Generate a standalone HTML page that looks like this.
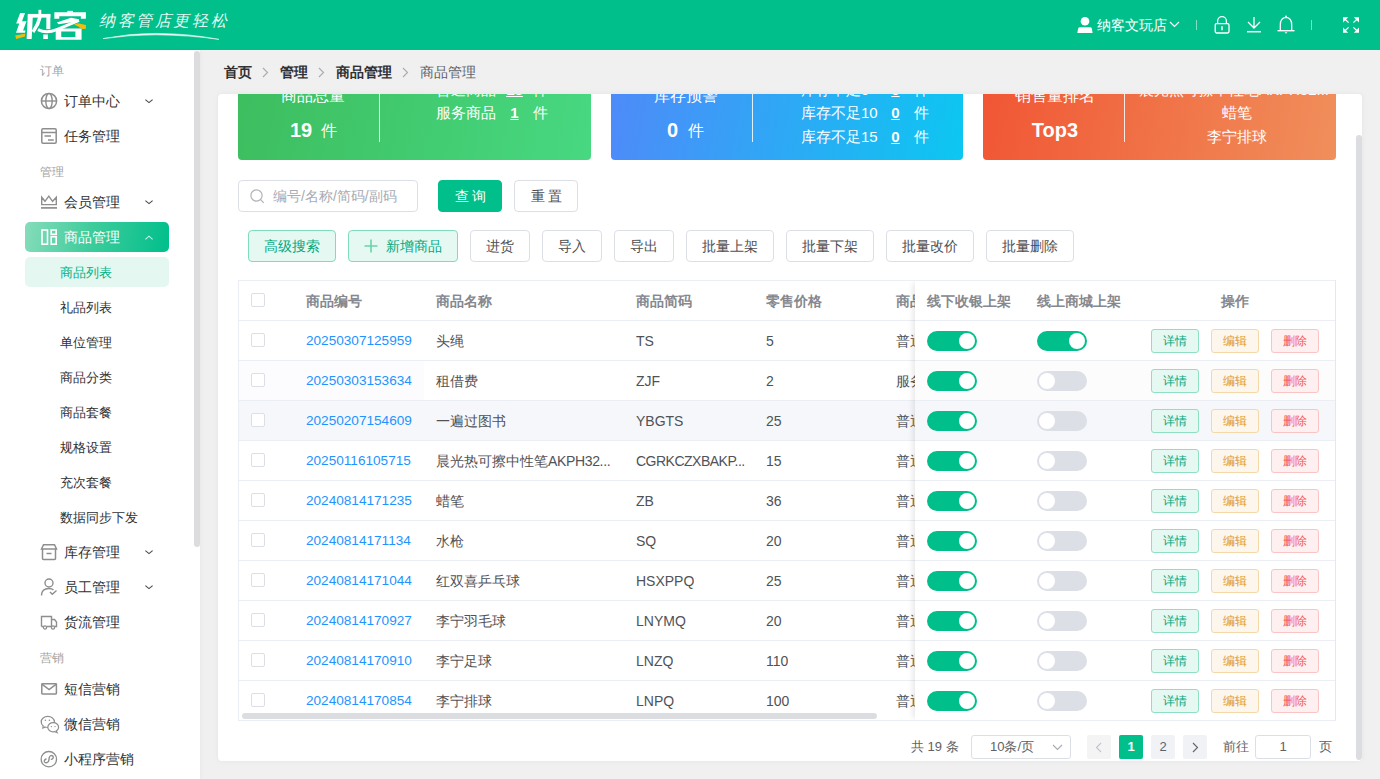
<!DOCTYPE html><html><head><meta charset="utf-8"><style>
*{box-sizing:border-box;margin:0;padding:0}
html,body{width:1380px;height:779px;overflow:hidden;background:#f0f0f0;font-family:"Liberation Sans",sans-serif;color:#303133}
.abs{position:absolute}
.hdr{position:absolute;left:0;top:0;width:1380px;height:50px;background:#00bf8b}
.side{position:absolute;left:0;top:50px;width:200px;height:729px;background:#fff;box-shadow:1px 0 4px rgba(0,0,0,.035)}
.lbl{position:absolute;left:40px;font-size:12px;color:#a3a3a3;line-height:14px;height:14px}
.mi{position:absolute;left:64px;font-size:14px;color:#303133;line-height:16px;height:16px;white-space:nowrap}
.si{position:absolute;left:60px;font-size:13px;color:#303133;line-height:16px;height:16px;white-space:nowrap}
.ic{position:absolute;left:40px;width:18px;height:18px}
.chev{position:absolute;left:145px;width:8px;height:5px}
.panel{position:absolute;left:218px;top:94px;width:1144px;height:667px;background:#fff;border-radius:4px;overflow:hidden;box-shadow:0 0 6px rgba(0,0,0,.05)}
.card{position:absolute;top:-46px;height:112px;border-radius:4px;color:#fff;overflow:hidden}
.ct{position:absolute;white-space:nowrap;line-height:18px;height:18px;color:#fff}
.btn{position:absolute;height:32px;border:1px solid #dcdfe6;border-radius:4px;background:#fff;font-size:14px;color:#4d4f54;text-align:center;line-height:30px;white-space:nowrap}
.th{position:absolute;font-size:14px;font-weight:bold;color:#85888e;line-height:16px;white-space:nowrap}
.td{position:absolute;font-size:14px;color:#505257;line-height:16px;white-space:nowrap;overflow:hidden;text-overflow:ellipsis}
.cb{position:absolute;width:14px;height:14px;border:1px solid #dcdfe6;border-radius:2px;background:#fff}
.sw{position:absolute;width:50px;height:20px;border-radius:10px}
.sw i{position:absolute;top:2px;width:16px;height:16px;border-radius:50%;background:#fff}
.ob{position:absolute;width:48px;height:24px;border:1px solid;border-radius:3px;font-size:12px;text-align:center;line-height:22px}
</style></head><body>
<div class="hdr">
<svg class="abs" style="left:10px;top:5px" width="85" height="40" viewBox="0 0 1380 649"><g fill="#fff"><polygon points="165,130 245,130 195,265 268,265 212,412 252,412 244,452 98,452 150,300 100,300"/><polygon points="290,145 372,145 352,552 270,552"/><polygon points="290,145 655,145 655,205 290,205"/><polygon points="462,78 508,78 508,150 462,150"/><polygon points="590,145 655,145 655,392 590,392"/><polygon points="465,170 525,170 475,320 395,455 352,420 420,300"/><polygon points="540,478 615,478 615,552 540,552"/><polygon points="932,95 1022,95 1022,150 932,150"/><polygon points="720,118 1232,118 1232,222 1150,222 1150,182 800,182 800,222 720,222"/><polygon points="760,285 990,205 1120,232 1105,262 790,312"/><path fill-rule="evenodd" d="M742 382 H1162 V562 H742 Z M832 428 V518 H1062 V428 Z"/></g><path d="M455 400 Q590 470 760 400 L1120 248" stroke="#fff" stroke-width="48" fill="none"/><polygon fill="#f6bb0a" points="85,495 245,468 242,512 100,552"/><polygon fill="#f6bb0a" points="1040,318 1100,298 1232,325 1232,385 1168,388 1100,345"/></svg>
<div class="abs" style="left:99px;top:10px;font-size:16px;color:rgba(255,255,255,.92);line-height:21px;letter-spacing:2.6px;font-style:italic;font-family:'Liberation Serif',serif">纳客管店更轻松</div>
<svg class="abs" style="left:100px;top:30px" width="125" height="12" viewBox="0 0 125 12"><path d="M3 8.6 Q30 3.2 56 3.4 Q90 3.6 119 9.4 Q90 5.2 56 4.8 Q30 4.8 3 8.6 Z" fill="#fff" stroke="#fff" stroke-width=".6" opacity=".92"/></svg>
<svg class="abs" style="left:1077px;top:17px" width="16" height="16" viewBox="0 0 16 16"><circle cx="8" cy="4.2" r="4.3" fill="#fff"/><path d="M0.3 16 L1.2 11.6 Q1.6 10.2 3 10.2 H13 Q14.4 10.2 14.8 11.6 L15.6 16 Z" fill="#fff"/></svg>
<div class="abs" style="left:1097px;top:17px;font-size:14px;color:#fff;line-height:16px">纳客文玩店</div>
<svg class="abs" style="left:1169px;top:21px" width="11" height="7" viewBox="0 0 11 7"><path d="M1 1 L5.5 5.5 L10 1" stroke="#fff" stroke-width="1.2" fill="none"/></svg>
<div class="abs" style="left:1196px;top:20px;width:1px;height:10px;background:rgba(255,255,255,.5)"></div>
<svg class="abs" style="left:1213px;top:15px" width="18" height="19" viewBox="0 0 18 19"><path d="M4.6 8.6 V6 A4.4 4.4 0 0 1 13.4 6 V8.6" stroke="#fff" stroke-width="1.3" fill="none"/><rect x="2.2" y="8.6" width="13.8" height="9.4" rx="1.4" stroke="#fff" stroke-width="1.3" fill="none"/><path d="M9 11.3 V15.3" stroke="#fff" stroke-width="1.5"/></svg>
<svg class="abs" style="left:1246px;top:16px" width="16" height="18" viewBox="0 0 16 18"><path d="M8 1 V12 M2 6 L8 12 L14 6" stroke="#fff" stroke-width="1.3" fill="none"/><path d="M1 15.7 H15" stroke="#fff" stroke-width="1.5"/></svg>
<svg class="abs" style="left:1276px;top:15px" width="20" height="20" viewBox="0 0 20 20"><path d="M4.3 15.6 V10 Q4.3 2.8 10 2.4 Q15.7 2.8 15.7 10 V15.6" stroke="#fff" stroke-width="1.3" fill="none"/><path d="M1.5 15.7 H18.5" stroke="#fff" stroke-width="1.4"/><path d="M8.6 17.2 H11.4 L10 18.8 Z" fill="#fff"/><circle cx="10" cy="1.6" r="1" fill="#fff"/></svg>
<div class="abs" style="left:1311px;top:20px;width:1px;height:10px;background:rgba(255,255,255,.5)"></div>
<svg class="abs" style="left:1342px;top:16px" width="18" height="18" viewBox="0 0 18 18"><g fill="#fff"><path d="M1 1.2 H6.2 L1 6.4 Z"/><path d="M17 1.2 H11.8 L17 6.4 Z"/><path d="M1 16.8 H6.2 L1 11.6 Z"/><path d="M17 16.8 H11.8 L17 11.6 Z"/></g><path d="M2.5 2.7 L6.6 6.6 M15.5 2.7 L11.4 6.6 M2.5 15.3 L6.6 11.4 M15.5 15.3 L11.4 11.4" stroke="#fff" stroke-width="1.25"/></svg>
</div>
<div class="side">
<div class="abs" style="left:194px;top:1px;width:6px;height:496px;background:#dcdcdf;border-radius:3px"></div>
<div class="lbl" style="top:14px">订单</div>
<div class="lbl" style="top:115px">管理</div>
<div class="lbl" style="top:601px">营销</div>
<div class="abs" style="left:25px;top:172px;width:144px;height:30px;border-radius:5px;background:linear-gradient(100deg,#86dcbb 0%,#3fcc9c 45%,#00bf8b 100%)"></div>
<div class="abs" style="left:25px;top:207px;width:144px;height:30px;border-radius:5px;background:#e5f7f1"></div>
<svg class="ic" style="top:42px;overflow:visible" viewBox="0 0 18 18"><circle cx="9" cy="9" r="7.6" stroke="#8e8e8e" stroke-width="1.5" fill="none"/><ellipse cx="9" cy="9" rx="3.2" ry="7.6" stroke="#8e8e8e" stroke-width="1.4" fill="none"/><path d="M1.5 9 H16.5" stroke="#8e8e8e" stroke-width="1.4"/></svg>
<div class="mi" style="top:43px;color:#303133">订单中心</div>
<svg class="chev" style="top:49px" viewBox="0 0 8 5"><path d="M0.4 0.6 L4 3.6 L7.6 0.6" stroke="#4a4a4a" stroke-width="1.1" fill="none"/></svg>
<svg class="ic" style="top:77px;overflow:visible" viewBox="0 0 18 18"><rect x="1.8" y="1.8" width="14.4" height="14.4" rx="1.2" stroke="#8e8e8e" stroke-width="1.5" fill="none"/><path d="M2 5.6 H16 M4.5 9 H11 M8 13 H13.8" stroke="#8e8e8e" stroke-width="1.5"/></svg>
<div class="mi" style="top:78px;color:#303133">任务管理</div>
<svg class="ic" style="top:142px;overflow:visible" viewBox="0 0 18 18"><path d="M1.7 5.2 V12.6 H16.3 V5.2 L12.6 9.3 L8.8 4.2 L5 9.3 Z" stroke="#8e8e8e" stroke-width="1.4" fill="none" stroke-linejoin="miter"/><path d="M1 15.9 H17" stroke="#8e8e8e" stroke-width="1.7"/></svg>
<div class="mi" style="top:144px;color:#303133">会员管理</div>
<svg class="chev" style="top:150px" viewBox="0 0 8 5"><path d="M0.4 0.6 L4 3.6 L7.6 0.6" stroke="#4a4a4a" stroke-width="1.1" fill="none"/></svg>
<svg class="ic" style="top:177px;overflow:visible" viewBox="0 0 18 18"><rect x="2" y="3" width="5.5" height="14.2" stroke="#fff" stroke-width="1.6" fill="none"/><rect x="11.2" y="3" width="5" height="4.3" stroke="#fff" stroke-width="1.6" fill="none"/><rect x="11.2" y="9.7" width="5" height="7.5" stroke="#fff" stroke-width="1.6" fill="none"/></svg>
<div class="mi" style="top:179px;color:#fff">商品管理</div>
<svg class="chev" style="top:185px;opacity:.8" viewBox="0 0 8 5"><path d="M0.4 4.4 L4 1.2 L7.6 4.4" stroke="#fff" stroke-width="1.1" fill="none"/></svg>
<svg class="ic" style="top:493px;overflow:visible" viewBox="0 0 18 18"><path d="M2.5 6 V15.5 Q2.5 16.5 3.5 16.5 H14.5 Q15.5 16.5 15.5 15.5 V6" stroke="#8e8e8e" stroke-width="1.5" fill="none"/><path d="M1.5 6 L3.5 1.8 H14.5 L16.5 6 Z" stroke="#8e8e8e" stroke-width="1.5" fill="none"/><path d="M6.5 10.5 H11.5" stroke="#8e8e8e" stroke-width="1.5"/></svg>
<div class="mi" style="top:494px;color:#303133">库存管理</div>
<svg class="chev" style="top:500px" viewBox="0 0 8 5"><path d="M0.4 0.6 L4 3.6 L7.6 0.6" stroke="#4a4a4a" stroke-width="1.1" fill="none"/></svg>
<svg class="ic" style="top:528px;overflow:visible" viewBox="0 0 18 18"><circle cx="9" cy="5" r="4" stroke="#8e8e8e" stroke-width="1.4" fill="none"/><path d="M1.5 17.5 Q1.5 10.5 9 10.5 Q12 10.5 13.5 12" stroke="#8e8e8e" stroke-width="1.4" fill="none"/><path d="M10 14 L12.3 16.3 L16.5 12.5" stroke="#8e8e8e" stroke-width="1.4" fill="none"/></svg>
<div class="mi" style="top:529px;color:#303133">员工管理</div>
<svg class="chev" style="top:535px" viewBox="0 0 8 5"><path d="M0.4 0.6 L4 3.6 L7.6 0.6" stroke="#4a4a4a" stroke-width="1.1" fill="none"/></svg>
<svg class="ic" style="top:563px;overflow:visible" viewBox="0 0 18 18"><path d="M1.5 13.5 V3.5 H11.5 V13.5 M11.5 6.5 H14.5 L16.5 9 V13.5 H14.5 M3.5 13.5 H1.5 M11.5 13.5 H7" stroke="#8e8e8e" stroke-width="1.4" fill="none"/><circle cx="5" cy="14.5" r="1.6" stroke="#8e8e8e" stroke-width="1.3" fill="none"/><circle cx="13" cy="14.5" r="1.6" stroke="#8e8e8e" stroke-width="1.3" fill="none"/></svg>
<div class="mi" style="top:564px;color:#303133">货流管理</div>
<svg class="ic" style="top:629px;overflow:visible" viewBox="0 0 18 18"><rect x="1.8" y="4.7" width="14.6" height="10.2" rx=".6" stroke="#8e8e8e" stroke-width="1.5" fill="none"/><path d="M2.2 5.4 L9.1 10.6 L16 5.4" stroke="#8e8e8e" stroke-width="1.5" fill="none"/></svg>
<div class="mi" style="top:631px;color:#303133">短信营销</div>
<svg class="ic" style="top:665px;overflow:visible" viewBox="0 0 18 18"><ellipse cx="7.8" cy="6.9" rx="6.6" ry="5.6" stroke="#8e8e8e" stroke-width="1.2" fill="none"/><path d="M3.2 11 L2.8 13.2 L5.6 12" stroke="#8e8e8e" stroke-width="1.1" fill="#fff"/><ellipse cx="13.2" cy="12.3" rx="5.4" ry="4.6" stroke="#8e8e8e" stroke-width="1.2" fill="#fff"/><path d="M16.2 16 L17.2 17.6 L14.6 16.7" stroke="#8e8e8e" stroke-width="1.1" fill="#fff"/><circle cx="5.4" cy="5.2" r=".75" fill="#8e8e8e"/><circle cx="9.4" cy="5.2" r=".75" fill="#8e8e8e"/><circle cx="11.4" cy="11.6" r=".7" fill="#8e8e8e"/><circle cx="15" cy="11.6" r=".7" fill="#8e8e8e"/></svg>
<div class="mi" style="top:666px;color:#303133">微信营销</div>
<svg class="ic" style="top:700px;overflow:visible" viewBox="0 0 18 18"><circle cx="8.85" cy="9.2" r="7.7" stroke="#8e8e8e" stroke-width="1.3" fill="none"/><path d="M6 9 C4.5 9.6 4 11 4.5 12 C5.2 13.2 7.6 13 8.4 11.5 C9 10.4 9 8.2 9.5 7 C10 5.6 11.6 5.2 12.6 5.9 C13.8 6.8 13.4 8.8 11.4 9.4" stroke="#8e8e8e" stroke-width="1.4" fill="none" stroke-linecap="round"/></svg>
<div class="mi" style="top:701px;color:#303133">小程序营销</div>
<div class="si" style="top:215px;color:#00b386">商品列表</div>
<div class="si" style="top:250px;color:#303133">礼品列表</div>
<div class="si" style="top:285px;color:#303133">单位管理</div>
<div class="si" style="top:320px;color:#303133">商品分类</div>
<div class="si" style="top:355px;color:#303133">商品套餐</div>
<div class="si" style="top:390px;color:#303133">规格设置</div>
<div class="si" style="top:425px;color:#303133">充次套餐</div>
<div class="si" style="top:460px;color:#303133">数据同步下发</div>
</div>
<div class="abs" style="left:224px;top:64px;font-size:14px;font-weight:bold;color:#303133;line-height:16px;white-space:nowrap">首页</div>
<div class="abs" style="left:280px;top:64px;font-size:14px;font-weight:bold;color:#303133;line-height:16px;white-space:nowrap">管理</div>
<div class="abs" style="left:336px;top:64px;font-size:14px;font-weight:bold;color:#303133;line-height:16px;white-space:nowrap">商品管理</div>
<div class="abs" style="left:420px;top:64px;font-size:14px;font-weight:normal;color:#606266;line-height:16px;white-space:nowrap">商品管理</div>
<svg class="abs" style="left:262px;top:67px" width="7" height="11" viewBox="0 0 7 11"><path d="M1 1 L5.5 5.5 L1 10" stroke="#a8abb2" stroke-width="1.1" fill="none"/></svg>
<svg class="abs" style="left:318px;top:67px" width="7" height="11" viewBox="0 0 7 11"><path d="M1 1 L5.5 5.5 L1 10" stroke="#a8abb2" stroke-width="1.1" fill="none"/></svg>
<svg class="abs" style="left:402px;top:67px" width="7" height="11" viewBox="0 0 7 11"><path d="M1 1 L5.5 5.5 L1 10" stroke="#a8abb2" stroke-width="1.1" fill="none"/></svg>
<div class="panel">
<div class="abs" style="left:1138px;top:41px;width:6px;height:625px;background:#dcdde0;border-radius:3px"></div>
<div class="card" style="left:20px;width:353px;background:linear-gradient(100deg,#3dbd5e 0%,#47d881 100%)">
<div class="abs" style="left:141px;top:0;width:1px;height:94px;background:rgba(255,255,255,.85)"></div>
</div>
<div class="card" style="left:393px;width:352px;background:linear-gradient(100deg,#5089f9 0%,#0cc7f1 100%)">
<div class="abs" style="left:141px;top:0;width:1px;height:94px;background:rgba(255,255,255,.85)"></div>
</div>
<div class="card" style="left:765px;width:353px;background:linear-gradient(100deg,#f15533 0%,#f08f5b 100%)">
<div class="abs" style="left:141px;top:0;width:1px;height:94px;background:rgba(255,255,255,.85)"></div>
</div>
<div class="ct" style="left:-55px;top:-10px;width:300px;text-align:center;font-size:16px;line-height:24px;height:24px;">商品总量</div>
<div class="ct" style="left:72px;top:24px;font-size:20px;line-height:24px;height:24px;font-weight:bold">19</div>
<div class="ct" style="left:103px;top:25px;font-size:16px;line-height:24px;height:24px;">件</div>
<div class="ct" style="left:218px;top:-16px;font-size:15px;line-height:24px;height:24px;">普通商品</div>
<div class="ct" style="left:146.5px;top:-16px;width:300px;text-align:center;font-size:15px;line-height:24px;height:24px;font-weight:bold"><u>18</u></div>
<div class="ct" style="left:315px;top:-16px;font-size:15px;line-height:24px;height:24px;">件</div>
<div class="ct" style="left:218px;top:7px;font-size:15px;line-height:24px;height:24px;">服务商品</div>
<div class="ct" style="left:146.5px;top:7px;width:300px;text-align:center;font-size:15px;line-height:24px;height:24px;font-weight:bold"><u>1</u></div>
<div class="ct" style="left:315px;top:7px;font-size:15px;line-height:24px;height:24px;">件</div>
<div class="ct" style="left:317.5px;top:-10px;width:300px;text-align:center;font-size:16px;line-height:24px;height:24px;">库存预警</div>
<div class="ct" style="left:449px;top:24px;font-size:20px;line-height:24px;height:24px;font-weight:bold">0</div>
<div class="ct" style="left:470px;top:25px;font-size:16px;line-height:24px;height:24px;">件</div>
<div class="ct" style="left:583px;top:-16px;font-size:15px;line-height:24px;height:24px;">库存不足5</div>
<div class="ct" style="left:527.5px;top:-16px;width:300px;text-align:center;font-size:15px;line-height:24px;height:24px;font-weight:bold"><u>0</u></div>
<div class="ct" style="left:696px;top:-16px;font-size:15px;line-height:24px;height:24px;">件</div>
<div class="ct" style="left:583px;top:7px;font-size:15px;line-height:24px;height:24px;">库存不足10</div>
<div class="ct" style="left:527.5px;top:7px;width:300px;text-align:center;font-size:15px;line-height:24px;height:24px;font-weight:bold"><u>0</u></div>
<div class="ct" style="left:696px;top:7px;font-size:15px;line-height:24px;height:24px;">件</div>
<div class="ct" style="left:583px;top:31px;font-size:15px;line-height:24px;height:24px;">库存不足15</div>
<div class="ct" style="left:527.5px;top:31px;width:300px;text-align:center;font-size:15px;line-height:24px;height:24px;font-weight:bold"><u>0</u></div>
<div class="ct" style="left:696px;top:31px;font-size:15px;line-height:24px;height:24px;">件</div>
<div class="ct" style="left:687px;top:-10px;width:300px;text-align:center;font-size:16px;line-height:24px;height:24px;">销售量排名</div>
<div class="ct" style="left:687px;top:24px;width:300px;text-align:center;font-size:20px;line-height:24px;height:24px;font-weight:bold">Top3</div>
<div class="ct" style="left:866px;top:-16px;width:300px;text-align:center;font-size:15px;line-height:24px;height:24px;">晨光热可擦中性笔AKPH32...</div>
<div class="ct" style="left:869px;top:7px;width:300px;text-align:center;font-size:15px;line-height:24px;height:24px;">蜡笔</div>
<div class="ct" style="left:869px;top:31px;width:300px;text-align:center;font-size:15px;line-height:24px;height:24px;">李宁排球</div>
<div class="abs" style="left:20px;top:86px;width:180px;height:32px;border:1px solid #dcdfe6;border-radius:4px"></div>
<svg class="abs" style="left:32px;top:95px" width="15" height="15" viewBox="0 0 15 15"><circle cx="6.5" cy="6.5" r="5.6" stroke="#b0b3b8" stroke-width="1.2" fill="none"/><path d="M10.6 10.6 L13.8 13.8" stroke="#b0b3b8" stroke-width="1.2"/></svg>
<div class="abs" style="left:55px;top:94px;font-size:14px;color:#a8abb2;line-height:16px;white-space:nowrap">编号/名称/简码/副码</div>
<div class="btn" style="left:220px;top:86px;width:64px;background:#00bf8b;border-color:#00bf8b;color:#fff;letter-spacing:3px;text-indent:3px">查询</div>
<div class="btn" style="left:296px;top:86px;width:64px;letter-spacing:3px;text-indent:3px">重置</div>
<div class="btn" style="left:30px;top:136px;width:88px;background:#e6f8f2;border-color:#7fdcbc;color:#00a87f;">高级搜索</div>
<div class="btn" style="left:130px;top:136px;width:110px;background:#e6f8f2;border-color:#7fdcbc;color:#00a87f;"><svg style="display:inline-block;vertical-align:-2px;margin-right:8px" width="14" height="14" viewBox="0 0 14 14"><path d="M7 0.5 V13.5 M0.5 7 H13.5" stroke="#6ad2ac" stroke-width="1.6"/></svg>新增商品</div>
<div class="btn" style="left:252px;top:136px;width:60px;">进货</div>
<div class="btn" style="left:324px;top:136px;width:60px;">导入</div>
<div class="btn" style="left:396px;top:136px;width:60px;">导出</div>
<div class="btn" style="left:468px;top:136px;width:88px;">批量上架</div>
<div class="btn" style="left:568px;top:136px;width:88px;">批量下架</div>
<div class="btn" style="left:668px;top:136px;width:88px;">批量改价</div>
<div class="btn" style="left:768px;top:136px;width:88px;">批量删除</div>
<div class="abs" style="left:20px;top:186px;width:1098px;height:441px;border:1px solid #ebeef5;border-right-color:#e4e7ed;overflow:hidden">
<div class="abs" style="left:0;top:40px;width:1096px;height:40px;background:#fff"></div>
<div class="abs" style="left:0;top:80px;width:1096px;height:40px;background:#fff"></div>
<div class="abs" style="left:0;top:80px;width:185px;height:40px;background:#fcfcfe"></div>
<div class="abs" style="left:0;top:120px;width:1096px;height:40px;background:#f5f7fa"></div>
<div class="abs" style="left:0;top:160px;width:1096px;height:40px;background:#fff"></div>
<div class="abs" style="left:0;top:200px;width:1096px;height:40px;background:#fff"></div>
<div class="abs" style="left:0;top:240px;width:1096px;height:40px;background:#fff"></div>
<div class="abs" style="left:0;top:280px;width:1096px;height:40px;background:#fff"></div>
<div class="abs" style="left:0;top:320px;width:1096px;height:40px;background:#fff"></div>
<div class="abs" style="left:0;top:360px;width:1096px;height:40px;background:#fff"></div>
<div class="abs" style="left:0;top:400px;width:1096px;height:40px;background:#fff"></div>
<div class="abs" style="left:0;top:39px;width:1096px;height:1px;background:#ebeef5"></div>
<div class="abs" style="left:0;top:79px;width:1096px;height:1px;background:#ebeef5"></div>
<div class="abs" style="left:0;top:119px;width:1096px;height:1px;background:#ebeef5"></div>
<div class="abs" style="left:0;top:159px;width:1096px;height:1px;background:#ebeef5"></div>
<div class="abs" style="left:0;top:199px;width:1096px;height:1px;background:#ebeef5"></div>
<div class="abs" style="left:0;top:239px;width:1096px;height:1px;background:#ebeef5"></div>
<div class="abs" style="left:0;top:279px;width:1096px;height:1px;background:#ebeef5"></div>
<div class="abs" style="left:0;top:319px;width:1096px;height:1px;background:#ebeef5"></div>
<div class="abs" style="left:0;top:359px;width:1096px;height:1px;background:#ebeef5"></div>
<div class="abs" style="left:0;top:399px;width:1096px;height:1px;background:#ebeef5"></div>
<div class="abs" style="left:0;top:439px;width:1096px;height:1px;background:#ebeef5"></div>
<div class="cb" style="left:12px;top:12px"></div>
<div class="th" style="left:67px;top:12px">商品编号</div>
<div class="th" style="left:197px;top:12px">商品名称</div>
<div class="th" style="left:397px;top:12px">商品简码</div>
<div class="th" style="left:527px;top:12px">零售价格</div>
<div class="th" style="left:657px;top:12px">商品类型</div>
<div class="cb" style="left:12px;top:52px"></div>
<div class="td" style="left:67px;top:52px;color:#1f93ff;font-size:13.6px">20250307125959</div>
<div class="td" style="left:197px;top:52px">头绳</div>
<div class="td" style="left:397px;top:52px">TS</div>
<div class="td" style="left:527px;top:52px">5</div>
<div class="td" style="left:657px;top:52px;width:19px;overflow:hidden;text-overflow:clip">普通</div>
<div class="cb" style="left:12px;top:92px"></div>
<div class="td" style="left:67px;top:92px;color:#1f93ff;font-size:13.6px">20250303153634</div>
<div class="td" style="left:197px;top:92px">租借费</div>
<div class="td" style="left:397px;top:92px">ZJF</div>
<div class="td" style="left:527px;top:92px">2</div>
<div class="td" style="left:657px;top:92px;width:19px;overflow:hidden;text-overflow:clip">服务</div>
<div class="cb" style="left:12px;top:132px"></div>
<div class="td" style="left:67px;top:132px;color:#1f93ff;font-size:13.6px">20250207154609</div>
<div class="td" style="left:197px;top:132px">一遍过图书</div>
<div class="td" style="left:397px;top:132px">YBGTS</div>
<div class="td" style="left:527px;top:132px">25</div>
<div class="td" style="left:657px;top:132px;width:19px;overflow:hidden;text-overflow:clip">普通</div>
<div class="cb" style="left:12px;top:172px"></div>
<div class="td" style="left:67px;top:172px;color:#1f93ff;font-size:13.6px">20250116105715</div>
<div class="td" style="left:197px;top:172px">晨光热可擦中性笔<span style="letter-spacing:-.35px">AKPH32...</span></div>
<div class="td" style="left:397px;top:172px"><span style="letter-spacing:-.5px">CGRKCZXBAKP...</span></div>
<div class="td" style="left:527px;top:172px">15</div>
<div class="td" style="left:657px;top:172px;width:19px;overflow:hidden;text-overflow:clip">普通</div>
<div class="cb" style="left:12px;top:212px"></div>
<div class="td" style="left:67px;top:212px;color:#1f93ff;font-size:13.6px">20240814171235</div>
<div class="td" style="left:197px;top:212px">蜡笔</div>
<div class="td" style="left:397px;top:212px">ZB</div>
<div class="td" style="left:527px;top:212px">36</div>
<div class="td" style="left:657px;top:212px;width:19px;overflow:hidden;text-overflow:clip">普通</div>
<div class="cb" style="left:12px;top:252px"></div>
<div class="td" style="left:67px;top:252px;color:#1f93ff;font-size:13.6px">20240814171134</div>
<div class="td" style="left:197px;top:252px">水枪</div>
<div class="td" style="left:397px;top:252px">SQ</div>
<div class="td" style="left:527px;top:252px">20</div>
<div class="td" style="left:657px;top:252px;width:19px;overflow:hidden;text-overflow:clip">普通</div>
<div class="cb" style="left:12px;top:292px"></div>
<div class="td" style="left:67px;top:292px;color:#1f93ff;font-size:13.6px">20240814171044</div>
<div class="td" style="left:197px;top:292px">红双喜乒乓球</div>
<div class="td" style="left:397px;top:292px">HSXPPQ</div>
<div class="td" style="left:527px;top:292px">25</div>
<div class="td" style="left:657px;top:292px;width:19px;overflow:hidden;text-overflow:clip">普通</div>
<div class="cb" style="left:12px;top:332px"></div>
<div class="td" style="left:67px;top:332px;color:#1f93ff;font-size:13.6px">20240814170927</div>
<div class="td" style="left:197px;top:332px">李宁羽毛球</div>
<div class="td" style="left:397px;top:332px">LNYMQ</div>
<div class="td" style="left:527px;top:332px">20</div>
<div class="td" style="left:657px;top:332px;width:19px;overflow:hidden;text-overflow:clip">普通</div>
<div class="cb" style="left:12px;top:372px"></div>
<div class="td" style="left:67px;top:372px;color:#1f93ff;font-size:13.6px">20240814170910</div>
<div class="td" style="left:197px;top:372px">李宁足球</div>
<div class="td" style="left:397px;top:372px">LNZQ</div>
<div class="td" style="left:527px;top:372px">110</div>
<div class="td" style="left:657px;top:372px;width:19px;overflow:hidden;text-overflow:clip">普通</div>
<div class="cb" style="left:12px;top:412px"></div>
<div class="td" style="left:67px;top:412px;color:#1f93ff;font-size:13.6px">20240814170854</div>
<div class="td" style="left:197px;top:412px">李宁排球</div>
<div class="td" style="left:397px;top:412px">LNPQ</div>
<div class="td" style="left:527px;top:412px">100</div>
<div class="td" style="left:657px;top:412px;width:19px;overflow:hidden;text-overflow:clip">普通</div>
<div class="abs" style="left:3px;top:432px;width:635px;height:6px;background:#dcdde0;border-radius:3px"></div>
<div class="abs" style="left:676px;top:0;width:421px;height:439px;background:transparent;box-shadow:-4px 0 6px -2px rgba(0,0,0,.10)">
<div class="abs" style="left:0;top:40px;width:421px;height:40px;background:#fff"></div>
<div class="abs" style="left:0;top:80px;width:421px;height:40px;background:#fcfcfd"></div>
<div class="abs" style="left:0;top:120px;width:421px;height:40px;background:#f5f7fa"></div>
<div class="abs" style="left:0;top:160px;width:421px;height:40px;background:#fff"></div>
<div class="abs" style="left:0;top:200px;width:421px;height:40px;background:#fff"></div>
<div class="abs" style="left:0;top:240px;width:421px;height:40px;background:#fff"></div>
<div class="abs" style="left:0;top:280px;width:421px;height:40px;background:#fff"></div>
<div class="abs" style="left:0;top:320px;width:421px;height:40px;background:#fff"></div>
<div class="abs" style="left:0;top:360px;width:421px;height:40px;background:#fff"></div>
<div class="abs" style="left:0;top:400px;width:421px;height:40px;background:#fff"></div>
<div class="abs" style="left:0;top:0;width:421px;height:40px;background:#fff"></div>
<div class="abs" style="left:0;top:39px;width:421px;height:1px;background:#ebeef5"></div>
<div class="abs" style="left:0;top:79px;width:421px;height:1px;background:#ebeef5"></div>
<div class="abs" style="left:0;top:119px;width:421px;height:1px;background:#ebeef5"></div>
<div class="abs" style="left:0;top:159px;width:421px;height:1px;background:#ebeef5"></div>
<div class="abs" style="left:0;top:199px;width:421px;height:1px;background:#ebeef5"></div>
<div class="abs" style="left:0;top:239px;width:421px;height:1px;background:#ebeef5"></div>
<div class="abs" style="left:0;top:279px;width:421px;height:1px;background:#ebeef5"></div>
<div class="abs" style="left:0;top:319px;width:421px;height:1px;background:#ebeef5"></div>
<div class="abs" style="left:0;top:359px;width:421px;height:1px;background:#ebeef5"></div>
<div class="abs" style="left:0;top:399px;width:421px;height:1px;background:#ebeef5"></div>
<div class="abs" style="left:0;top:439px;width:421px;height:1px;background:#ebeef5"></div>
<div class="th" style="left:12px;top:12px">线下收银上架</div>
<div class="th" style="left:122px;top:12px">线上商城上架</div>
<div class="th" style="left:220px;top:12px;width:200px;text-align:center">操作</div>
<div class="sw" style="left:12px;top:50px;background:#00bf8b"><i style="left:32px"></i></div>
<div class="sw" style="left:122px;top:50px;background:#00bf8b"><i style="left:32px"></i></div>
<div class="ob" style="left:236px;top:48px;background:#e6f8f2;border-color:#8fdfc3;color:#00a67e">详情</div>
<div class="ob" style="left:296px;top:48px;background:#fdf6ec;border-color:#f5d8a8;color:#df982c">编辑</div>
<div class="ob" style="left:356px;top:48px;background:#fef0f0;border-color:#fbc4c4;color:#f05656">删除</div>
<div class="sw" style="left:12px;top:90px;background:#00bf8b"><i style="left:32px"></i></div>
<div class="sw" style="left:122px;top:90px;background:#dcdfe6"><i style="left:2px"></i></div>
<div class="ob" style="left:236px;top:88px;background:#e6f8f2;border-color:#8fdfc3;color:#00a67e">详情</div>
<div class="ob" style="left:296px;top:88px;background:#fdf6ec;border-color:#f5d8a8;color:#df982c">编辑</div>
<div class="ob" style="left:356px;top:88px;background:#fef0f0;border-color:#fbc4c4;color:#f05656">删除</div>
<div class="sw" style="left:12px;top:130px;background:#00bf8b"><i style="left:32px"></i></div>
<div class="sw" style="left:122px;top:130px;background:#dcdfe6"><i style="left:2px"></i></div>
<div class="ob" style="left:236px;top:128px;background:#e6f8f2;border-color:#8fdfc3;color:#00a67e">详情</div>
<div class="ob" style="left:296px;top:128px;background:#fdf6ec;border-color:#f5d8a8;color:#df982c">编辑</div>
<div class="ob" style="left:356px;top:128px;background:#fef0f0;border-color:#fbc4c4;color:#f05656">删除</div>
<div class="sw" style="left:12px;top:170px;background:#00bf8b"><i style="left:32px"></i></div>
<div class="sw" style="left:122px;top:170px;background:#dcdfe6"><i style="left:2px"></i></div>
<div class="ob" style="left:236px;top:168px;background:#e6f8f2;border-color:#8fdfc3;color:#00a67e">详情</div>
<div class="ob" style="left:296px;top:168px;background:#fdf6ec;border-color:#f5d8a8;color:#df982c">编辑</div>
<div class="ob" style="left:356px;top:168px;background:#fef0f0;border-color:#fbc4c4;color:#f05656">删除</div>
<div class="sw" style="left:12px;top:210px;background:#00bf8b"><i style="left:32px"></i></div>
<div class="sw" style="left:122px;top:210px;background:#dcdfe6"><i style="left:2px"></i></div>
<div class="ob" style="left:236px;top:208px;background:#e6f8f2;border-color:#8fdfc3;color:#00a67e">详情</div>
<div class="ob" style="left:296px;top:208px;background:#fdf6ec;border-color:#f5d8a8;color:#df982c">编辑</div>
<div class="ob" style="left:356px;top:208px;background:#fef0f0;border-color:#fbc4c4;color:#f05656">删除</div>
<div class="sw" style="left:12px;top:250px;background:#00bf8b"><i style="left:32px"></i></div>
<div class="sw" style="left:122px;top:250px;background:#dcdfe6"><i style="left:2px"></i></div>
<div class="ob" style="left:236px;top:248px;background:#e6f8f2;border-color:#8fdfc3;color:#00a67e">详情</div>
<div class="ob" style="left:296px;top:248px;background:#fdf6ec;border-color:#f5d8a8;color:#df982c">编辑</div>
<div class="ob" style="left:356px;top:248px;background:#fef0f0;border-color:#fbc4c4;color:#f05656">删除</div>
<div class="sw" style="left:12px;top:290px;background:#00bf8b"><i style="left:32px"></i></div>
<div class="sw" style="left:122px;top:290px;background:#dcdfe6"><i style="left:2px"></i></div>
<div class="ob" style="left:236px;top:288px;background:#e6f8f2;border-color:#8fdfc3;color:#00a67e">详情</div>
<div class="ob" style="left:296px;top:288px;background:#fdf6ec;border-color:#f5d8a8;color:#df982c">编辑</div>
<div class="ob" style="left:356px;top:288px;background:#fef0f0;border-color:#fbc4c4;color:#f05656">删除</div>
<div class="sw" style="left:12px;top:330px;background:#00bf8b"><i style="left:32px"></i></div>
<div class="sw" style="left:122px;top:330px;background:#dcdfe6"><i style="left:2px"></i></div>
<div class="ob" style="left:236px;top:328px;background:#e6f8f2;border-color:#8fdfc3;color:#00a67e">详情</div>
<div class="ob" style="left:296px;top:328px;background:#fdf6ec;border-color:#f5d8a8;color:#df982c">编辑</div>
<div class="ob" style="left:356px;top:328px;background:#fef0f0;border-color:#fbc4c4;color:#f05656">删除</div>
<div class="sw" style="left:12px;top:370px;background:#00bf8b"><i style="left:32px"></i></div>
<div class="sw" style="left:122px;top:370px;background:#dcdfe6"><i style="left:2px"></i></div>
<div class="ob" style="left:236px;top:368px;background:#e6f8f2;border-color:#8fdfc3;color:#00a67e">详情</div>
<div class="ob" style="left:296px;top:368px;background:#fdf6ec;border-color:#f5d8a8;color:#df982c">编辑</div>
<div class="ob" style="left:356px;top:368px;background:#fef0f0;border-color:#fbc4c4;color:#f05656">删除</div>
<div class="sw" style="left:12px;top:410px;background:#00bf8b"><i style="left:32px"></i></div>
<div class="sw" style="left:122px;top:410px;background:#dcdfe6"><i style="left:2px"></i></div>
<div class="ob" style="left:236px;top:408px;background:#e6f8f2;border-color:#8fdfc3;color:#00a67e">详情</div>
<div class="ob" style="left:296px;top:408px;background:#fdf6ec;border-color:#f5d8a8;color:#df982c">编辑</div>
<div class="ob" style="left:356px;top:408px;background:#fef0f0;border-color:#fbc4c4;color:#f05656">删除</div>
</div>
</div>
<div class="abs" style="left:693px;top:645px;font-size:13px;color:#606266;line-height:16px;white-space:nowrap">共 19 条</div>
<div class="abs" style="left:753px;top:641px;width:100px;height:24px;border:1px solid #dcdfe6;border-radius:3px;font-size:13px;color:#606266;line-height:22px;padding-left:18px">10条/页</div>
<svg class="abs" style="left:834px;top:650px" width="11" height="7" viewBox="0 0 11 7"><path d="M1 1 L5.5 5.5 L10 1" stroke="#a8abb2" stroke-width="1.1" fill="none"/></svg>
<div class="abs" style="left:869px;top:641px;width:24px;height:24px;background:#f4f4f5;border-radius:2px"></div>
<svg class="abs" style="left:877px;top:648px" width="7" height="11" viewBox="0 0 7 11"><path d="M6 1 L1.5 5.5 L6 10" stroke="#c0c4cc" stroke-width="1.1" fill="none"/></svg>
<div class="abs" style="left:901px;top:641px;width:24px;height:24px;background:#00bf8b;border-radius:2px;color:#fff;font-size:13px;font-weight:bold;text-align:center;line-height:24px">1</div>
<div class="abs" style="left:933px;top:641px;width:24px;height:24px;background:#f0f2f5;border-radius:2px;color:#606266;font-size:13px;text-align:center;line-height:24px">2</div>
<div class="abs" style="left:965px;top:641px;width:24px;height:24px;background:#f0f2f5;border-radius:2px"></div>
<svg class="abs" style="left:974px;top:648px" width="7" height="11" viewBox="0 0 7 11"><path d="M1 1 L5.5 5.5 L1 10" stroke="#606266" stroke-width="1.1" fill="none"/></svg>
<div class="abs" style="left:1005px;top:645px;font-size:13px;color:#606266;line-height:16px;white-space:nowrap">前往</div>
<div class="abs" style="left:1037px;top:641px;width:56px;height:24px;border:1px solid #dcdfe6;border-radius:3px;font-size:13px;color:#606266;line-height:22px;text-align:center">1</div>
<div class="abs" style="left:1101px;top:645px;font-size:13px;color:#606266;line-height:16px;white-space:nowrap">页</div>
</div>
</body></html>
